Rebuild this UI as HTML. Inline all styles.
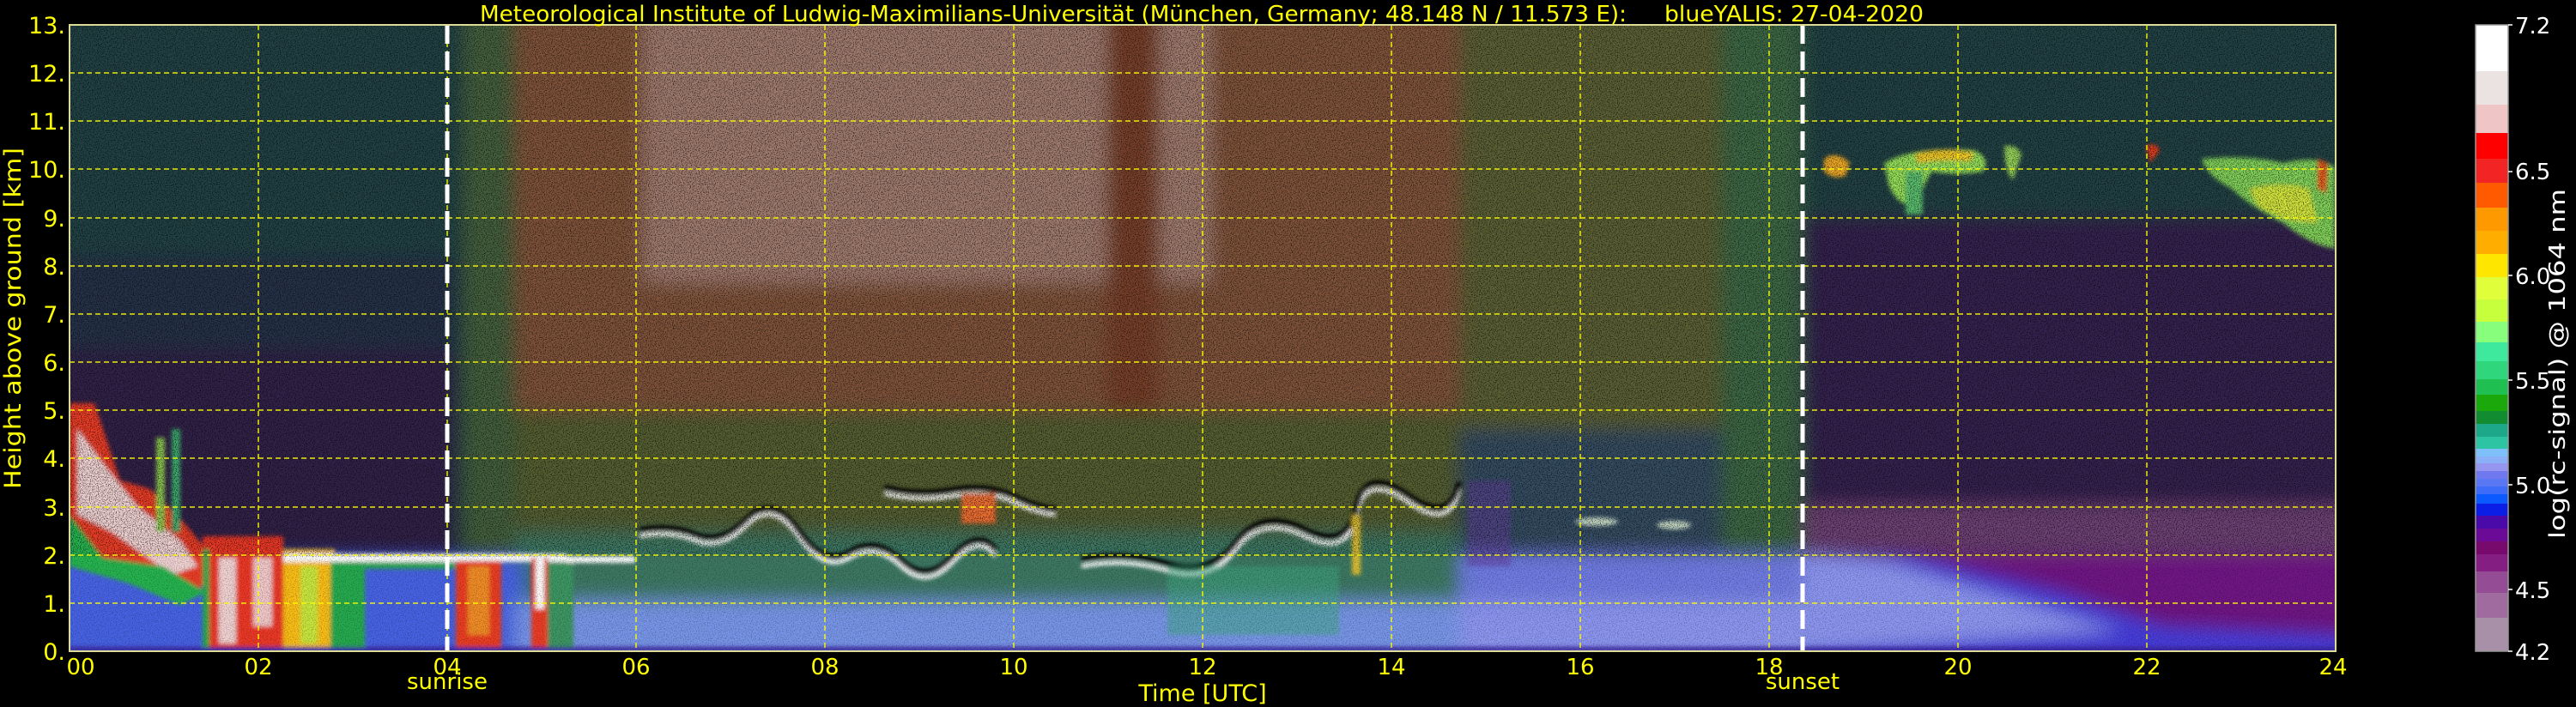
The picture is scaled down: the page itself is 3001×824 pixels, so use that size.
<!DOCTYPE html>
<html><head><meta charset="utf-8"><style>
html,body{margin:0;padding:0;background:#000;}
svg{display:block;}
text{font-family:"DejaVu Sans","Liberation Sans",sans-serif;}
</style></head><body>
<svg width="3001" height="824" viewBox="0 0 3001 824" xmlns="http://www.w3.org/2000/svg">
<defs>
<clipPath id="pc"><rect x="81" y="29" width="2640" height="730"/></clipPath>
<filter id="bl" x="-5%" y="-5%" width="110%" height="110%"><feGaussianBlur stdDeviation="10"/></filter>
<filter id="bs" x="-20%" y="-20%" width="140%" height="140%"><feGaussianBlur stdDeviation="2.5"/></filter>
<filter id="nz" x="0" y="0" width="100%" height="100%">
<feTurbulence type="fractalNoise" baseFrequency="0.9" numOctaves="1" seed="3"/>
<feColorMatrix type="matrix" values="0 0 0 0 0  0 0 0 0 0  0 0 0 0 0  -5 0 0 0 2.6"/>
</filter>
</defs>
<rect width="3001" height="824" fill="#000"/>
<g clip-path="url(#pc)">
<g filter="url(#bl)">
<rect x="60" y="10" width="2680" height="770" fill="rgb(36,66,68)"/>
<rect x="60" y="400" width="470" height="260" fill="rgb(48,34,72)"/>
<rect x="60" y="300" width="470" height="110" fill="rgb(40,50,72)"/>
<rect x="540" y="10" width="70" height="640" fill="rgb(68,96,62)"/>
<rect x="600" y="10" width="1105" height="480" fill="rgb(128,82,58)"/>
<rect x="749" y="10" width="663" height="320" fill="rgb(160,124,110)"/>
<rect x="1290" y="10" width="60" height="480" fill="rgb(120,64,44)"/>
<rect x="600" y="480" width="1105" height="170" fill="rgb(84,94,50)"/>
<rect x="600" y="620" width="1105" height="90" fill="rgb(62,120,100)"/>
<rect x="1700" y="10" width="310" height="500" fill="rgb(92,96,54)"/>
<rect x="1700" y="500" width="310" height="150" fill="rgb(52,78,98)"/>
<rect x="2005" y="10" width="95" height="640" fill="rgb(62,104,68)"/>
<rect x="2100" y="254" width="640" height="340" fill="rgb(54,36,80)"/>
<rect x="2100" y="588" width="640" height="62" fill="rgb(110,66,116)"/>
<rect x="2100" y="645" width="640" height="120" fill="rgb(112,24,132)"/>
<polygon points="2100,645 2230,650 2400,690 2520,730 2740,740 2740,780 2100,780" fill="rgb(70,60,220)"/>
<polygon points="2100,645 2200,655 2350,700 2470,735 2100,760" fill="rgb(140,150,240)"/>
<rect x="60" y="650" width="550" height="130" fill="rgb(70,100,228)"/>
<rect x="600" y="700" width="1105" height="80" fill="rgb(120,150,232)"/>
<rect x="1700" y="645" width="400" height="135" fill="rgb(112,124,226)"/>
<rect x="1700" y="700" width="400" height="80" fill="rgb(140,150,240)"/>
</g>
<g filter="url(#bs)">
<path d="M2125,185 Q2140,175 2155,190 L2150,205 Q2135,210 2125,200Z" fill="rgb(240,170,40)"/>
<path d="M2195,190 Q2230,170 2300,175 Q2320,185 2310,200 Q2280,205 2250,200 L2230,240 Q2210,240 2200,215Z" fill="rgb(150,225,90)"/>
<path d="M2230,180 Q2260,170 2300,178 L2295,188 Q2260,185 2235,190Z" fill="rgb(240,200,40)"/>
<rect x="2220" y="200" width="20" height="50" fill="rgb(90,190,110)"/>
<path d="M2335,170 Q2350,168 2355,180 L2345,210 Q2335,200 2335,170Z" fill="rgb(150,210,90)"/>
<path d="M2500,170 Q2512,165 2516,175 L2505,190Z" fill="rgb(230,60,30)"/>
<path d="M2565,185 Q2620,180 2660,190 Q2700,180 2720,195 L2720,290 Q2690,285 2660,260 Q2620,240 2600,220 Q2570,205 2565,185Z" fill="rgb(130,210,90)"/>
<path d="M2620,220 Q2660,210 2690,220 L2700,260 Q2660,260 2630,240Z" fill="rgb(210,230,60)"/>
<path d="M2700,185 L2712,190 L2710,225 L2700,220Z" fill="rgb(230,90,30)"/>
<polygon points="81,470 110,470 140,560 175,570 215,610 240,640 240,680 210,700 150,660 81,650" fill="rgb(235,60,40)"/>
<polygon points="90,500 120,540 160,590 210,630 230,660 200,670 130,620 90,600" fill="rgb(240,210,210)"/>
<polygon points="81,600 81,660 150,680 210,705 240,690 190,660 120,650" fill="rgb(40,180,80)"/>
<rect x="200" y="500" width="10" height="120" fill="rgb(60,170,110)"/>
<rect x="182" y="510" width="10" height="110" fill="rgb(140,200,80)"/>
<rect x="236" y="625" width="94" height="134" fill="rgb(235,55,40)"/>
<rect x="255" y="650" width="20" height="100" fill="rgb(240,210,210)"/>
<rect x="295" y="650" width="22" height="80" fill="rgb(240,200,200)"/>
<rect x="330" y="640" width="60" height="119" fill="rgb(250,190,20)"/>
<rect x="350" y="660" width="20" height="90" fill="rgb(200,230,60)"/>
<rect x="385" y="650" width="40" height="105" fill="rgb(40,170,80)"/>
<rect x="236" y="640" width="8" height="119" fill="rgb(40,170,80)"/>
<rect x="330" y="645" width="330" height="10" fill="#fff"/>
<rect x="420" y="655" width="110" height="8" fill="rgb(40,170,90)"/>
<rect x="531" y="654" width="53" height="105" fill="rgb(235,60,35)"/>
<rect x="545" y="660" width="25" height="80" fill="rgb(240,140,40)"/>
<rect x="619" y="650" width="19" height="109" fill="rgb(235,60,40)"/>
<rect x="624" y="650" width="10" height="60" fill="#fff"/>
<rect x="638" y="655" width="30" height="104" fill="rgb(60,150,100)"/>
<rect x="660" y="648" width="80" height="8" fill="#fff"/>
<path d="M745,625 Q780,618 810,630 T870,612 T930,625 T990,650 T1050,660 T1110,655 T1160,648" stroke="#fff" stroke-width="5" fill="none"/>
<path d="M745,618 Q780,611 810,623 T870,605 T930,618 T990,643 T1050,653 T1110,648 T1160,641" stroke="#000" stroke-width="6" fill="none"/>
<path d="M1030,575 Q1070,585 1110,578 T1180,585 T1230,600" stroke="#fff" stroke-width="5" fill="none"/>
<path d="M1030,568 Q1070,578 1110,571 T1180,578 T1230,593" stroke="#000" stroke-width="6" fill="none"/>
<rect x="1120" y="575" width="40" height="35" fill="rgb(235,110,50)"/>
<path d="M1260,660 Q1310,650 1360,665 T1440,640 T1520,625 T1580,600 T1640,585 T1700,570" stroke="#fff" stroke-width="5" fill="none"/>
<path d="M1260,652 Q1310,642 1360,657 T1440,632 T1520,617 T1580,592 T1640,577 T1700,562" stroke="#000" stroke-width="6" fill="none"/>
<rect x="1575" y="600" width="10" height="70" fill="rgb(220,190,50)"/>
<rect x="1360" y="660" width="200" height="80" fill="rgb(60,170,130)" opacity="0.5"/>
<rect x="1710" y="560" width="50" height="100" fill="rgb(100,60,160)" opacity="0.5"/>
<ellipse cx="1860" cy="608" rx="25" ry="5" fill="rgb(200,220,200)"/>
<ellipse cx="1950" cy="612" rx="20" ry="5" fill="rgb(200,220,200)"/>
<rect x="81" y="754" width="2640" height="5" fill="rgb(60,40,160)"/>
</g>
<rect x="81" y="29" width="2640" height="620" filter="url(#nz)" opacity="0.6"/>
<rect x="81" y="649" width="2640" height="110" filter="url(#nz)" opacity="0.25"/>
</g>
<g stroke="#ffff00" stroke-width="1.5" stroke-dasharray="6,4" fill="none" opacity="0.9">
<path d="M81,85H2721M81,141H2721M81,197H2721M81,254H2721M81,310H2721M81,366H2721M81,422H2721M81,478H2721M81,534H2721M81,591H2721M81,647H2721M81,703H2721"/>
<path d="M301,29V759M521,29V759M741,29V759M961,29V759M1181,29V759M1401,29V759M1621,29V759M1841,29V759M2061,29V759M2281,29V759M2501,29V759"/>
</g>
<g stroke="#fff" stroke-width="5" stroke-dasharray="22,9" fill="none">
<path d="M521,29V759"/><path d="M2100,29V759"/>
</g>
<rect x="81" y="29" width="2640" height="730" fill="none" stroke="rgb(220,220,150)" stroke-width="2"/>
<g fill="#ffff00" font-size="27" text-anchor="end">
<text x="76" y="39">13.</text><text x="76" y="95">12.</text><text x="76" y="151">11.</text><text x="76" y="207">10.</text>
<text x="76" y="264">9.</text><text x="76" y="320">8.</text><text x="76" y="376">7.</text><text x="76" y="432">6.</text>
<text x="76" y="488">5.</text><text x="76" y="544">4.</text><text x="76" y="601">3.</text><text x="76" y="657">2.</text>
<text x="76" y="713">1.</text><text x="76" y="769">0.</text>
</g>
<g fill="#ffff00" font-size="26" text-anchor="middle">
<text x="94" y="786">00</text><text x="301" y="786">02</text><text x="521" y="786">04</text><text x="741" y="786">06</text>
<text x="961" y="786">08</text><text x="1181" y="786">10</text><text x="1401" y="786">12</text><text x="1621" y="786">14</text>
<text x="1841" y="786">16</text><text x="2061" y="786">18</text><text x="2281" y="786">20</text><text x="2501" y="786">22</text>
<text x="2718" y="786">24</text>
<text x="521" y="803">sunrise</text><text x="2100" y="803">sunset</text>
<text x="1401" y="817" font-size="27">Time [UTC]</text>
<text transform="translate(24,371) rotate(-90)" font-size="27" textLength="398" lengthAdjust="spacingAndGlyphs">Height above ground [km]</text>
</g>
<g fill="#ffff00" font-size="26">
<text x="559" y="25" textLength="1336" lengthAdjust="spacingAndGlyphs">Meteorological Institute of Ludwig-Maximilians-Universität (München, Germany; 48.148 N / 11.573 E):</text>
<text x="1939" y="25" textLength="302" lengthAdjust="spacingAndGlyphs">blueYALIS: 27-04-2020</text>
</g>
<g>
<rect x="2884" y="29" width="38" height="54" fill="#ffffff"/>
<rect x="2884" y="83" width="38" height="39" fill="#ebe2e2"/>
<rect x="2884" y="122" width="38" height="33" fill="#efc5c5"/>
<rect x="2884" y="155" width="38" height="30" fill="#ff0000"/>
<rect x="2884" y="185" width="38" height="28" fill="#f22424"/>
<rect x="2884" y="213" width="38" height="29" fill="#ff5a00"/>
<rect x="2884" y="242" width="38" height="27" fill="#ff9900"/>
<rect x="2884" y="269" width="38" height="27" fill="#ffae00"/>
<rect x="2884" y="296" width="38" height="27" fill="#ffe600"/>
<rect x="2884" y="323" width="38" height="26" fill="#e0ff3a"/>
<rect x="2884" y="349" width="38" height="26" fill="#c8ff3c"/>
<rect x="2884" y="375" width="38" height="24" fill="#88ff7c"/>
<rect x="2884" y="399" width="38" height="22" fill="#3ee89c"/>
<rect x="2884" y="421" width="38" height="21" fill="#2fd67c"/>
<rect x="2884" y="442" width="38" height="18" fill="#1fbf52"/>
<rect x="2884" y="460" width="38" height="19" fill="#1aa80a"/>
<rect x="2884" y="479" width="38" height="15" fill="#118c30"/>
<rect x="2884" y="494" width="38" height="15" fill="#1da88a"/>
<rect x="2884" y="509" width="38" height="14" fill="#2dc4a4"/>
<rect x="2884" y="523" width="38" height="9" fill="#7ec0fa"/>
<rect x="2884" y="532" width="38" height="8" fill="#8cb0f8"/>
<rect x="2884" y="540" width="38" height="9" fill="#9696f0"/>
<rect x="2884" y="549" width="38" height="9" fill="#7078f0"/>
<rect x="2884" y="558" width="38" height="9" fill="#5a78f4"/>
<rect x="2884" y="567" width="38" height="9" fill="#3c6cf8"/>
<rect x="2884" y="576" width="38" height="11" fill="#0a5aff"/>
<rect x="2884" y="587" width="38" height="14" fill="#0a1ee6"/>
<rect x="2884" y="601" width="38" height="15" fill="#4a0aaa"/>
<rect x="2884" y="616" width="38" height="15" fill="#6a0a96"/>
<rect x="2884" y="631" width="38" height="15" fill="#780a6e"/>
<rect x="2884" y="646" width="38" height="20" fill="#841e82"/>
<rect x="2884" y="666" width="38" height="25" fill="#944c94"/>
<rect x="2884" y="691" width="38" height="29" fill="#a06ca0"/>
<rect x="2884" y="720" width="38" height="39" fill="#a890a8"/>
<rect x="2884" y="29" width="38" height="730" fill="none" stroke="#999" stroke-width="1.5"/>
<g stroke="#fff" stroke-width="1.5"><path d="M2922,29h5M2922,200h5M2922,321h5M2922,443h5M2922,565h5M2922,687h5M2922,759h5"/></g>
<g fill="#fff" font-size="26">
<text x="2930" y="39">7.2</text><text x="2930" y="209">6.5</text><text x="2930" y="331">6.0</text>
<text x="2930" y="453">5.5</text><text x="2930" y="575">5.0</text><text x="2930" y="697">4.5</text><text x="2930" y="769">4.2</text>
<text transform="translate(2988,424) rotate(-90)" text-anchor="middle" font-size="26" textLength="408" lengthAdjust="spacingAndGlyphs">log(rc-signal) @ 1064 nm</text>
</g>
</g>
</svg>
</body></html>
